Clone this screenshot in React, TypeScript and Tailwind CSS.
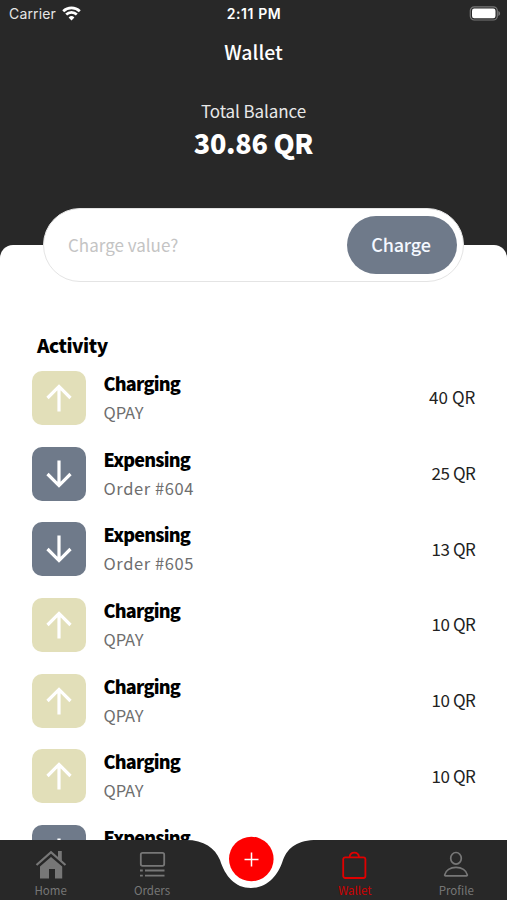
import React from "react";

type Entry = { kind: "Charging" | "Expensing"; detail: string; amount: string };

const entries: Entry[] = [
  { kind: "Charging", detail: "QPAY", amount: "40 QR" },
  { kind: "Expensing", detail: "Order #604", amount: "25 QR" },
  { kind: "Expensing", detail: "Order #605", amount: "13 QR" },
  { kind: "Charging", detail: "QPAY", amount: "10 QR" },
  { kind: "Charging", detail: "QPAY", amount: "10 QR" },
  { kind: "Charging", detail: "QPAY", amount: "10 QR" },
  { kind: "Expensing", detail: "Order #606", amount: "10 QR" },
];

function StatusBar() {
  return (
    <div className="grid h-7 grid-cols-3 items-center pl-[9px] pr-[6px] font-['Inter','Liberation_Sans',sans-serif] text-[14px] leading-7 text-[#e6e6e6]">
      <div className="flex items-center gap-[6px]">
        <span className="tracking-[0.15px]">Carrier</span>
        <svg width="19" height="15" viewBox="0 0 19 15" fill="none" stroke="#fff" strokeWidth="2.7" className="-mt-[2px]">
          <path d="M1.2 5.2a12 12 0 0 1 16.6 0" />
          <path d="M4.2 8.5a7.6 7.6 0 0 1 10.6 0" />
          <path d="M9.5 14.4 6.6 11.4a4.2 4.2 0 0 1 5.8 0z" fill="#fff" stroke="none" />
        </svg>
      </div>
      <span className="pr-[2px] text-center text-[14px] font-semibold tracking-[0.6px] text-white">2:11 PM</span>
      <svg className="-mt-[2px] justify-self-end" width="32" height="15" viewBox="0 0 32 15">
        <rect x="1.3" y=".8" width="27" height="13.2" rx="4" fill="none" stroke="#777" strokeWidth="1.2" />
        <rect x="3" y="2.5" width="23.5" height="9.8" rx="2.2" fill="#fff" />
        <path d="M29.3 5v5c1.2-.4 1.8-1.4 1.8-2.5s-.6-2.1-1.8-2.5z" fill="#777" />
      </svg>
    </div>
  );
}

function ActivityRow({ kind, detail, amount }: Entry) {
  const up = kind === "Charging";
  return (
    <li className="flex h-[54px] shrink-0 items-center">
      <div className={`flex size-[54px] items-center justify-center rounded-[10px] ${up ? "bg-[#e2dfb9]" : "bg-[#6f7a8a]"}`}>
        <svg width="28" height="28" viewBox="0 0 28 28" fill="none" stroke="#fff" strokeWidth="3.2" className={up ? "" : "rotate-180"}>
          <path d="M14 27.5V2M2.5 14 14 2.4 25.5 14" />
        </svg>
      </div>
      <div className="ml-[18px] flex-1">
        <div className="h-[29px] text-[18px] font-black leading-[26px] tracking-[-0.75px] text-black">{kind}</div>
        <div className={`h-[27px] text-[16.5px] font-normal leading-[27px] text-[#6e6e6e] ${up ? "tracking-[-0.1px]" : "tracking-[0.6px]"}`}>{detail}</div>
      </div>
      <div className={`-mt-[2px] text-[17px] text-[#222] ${amount === "40 QR" ? "tracking-[0.1px]" : "tracking-[-0.4px]"}`}>{amount}</div>
    </li>
  );
}

function HomeIcon() {
  return (
    <svg width="32" height="30" viewBox="0 0 32 30" fill="#777">
      <path d="M5 16.5 16 7 27.2 16.5V28.5H20V19h-6v9.5H5z" />
      <path d="M1.2 15.5 16 2.5 30.8 15.5" fill="none" stroke="#282828" strokeWidth="4.6" />
      <path d="M1.5 15 16 2.2 30.5 15" fill="none" stroke="#777" strokeWidth="2.2" />
      <path d="M23 1h3.8v10.5l-3.8-3.4z" />
    </svg>
  );
}

function OrdersIcon() {
  return (
    <svg width="28" height="28" viewBox="0 0 28 28" fill="none" stroke="#777" strokeWidth="1.8">
      <rect x="2.8" y="1.8" width="23.4" height="13" rx="1.8" />
      <path d="M7 19.5H26.5M7 24.7H26.5M2 19.5h2.8M2 24.7h2.8" />
    </svg>
  );
}

function WalletIcon() {
  return (
    <svg width="28" height="30" viewBox="0 0 28 30" fill="none" stroke="#e00000" strokeWidth="1.8">
      <rect x="2.2" y="7.3" width="22.2" height="20.7" rx="2" />
      <path d="M8.6 7.3c.2-3 2.3-4.7 4.7-4.7s4.5 1.7 4.7 4.7" />
    </svg>
  );
}

function ProfileIcon() {
  return (
    <svg width="26" height="28" viewBox="0 0 26 28" fill="none" stroke="#777" strokeWidth="1.7">
      <ellipse cx="13" cy="7.3" rx="5.3" ry="5.8" />
      <path d="M2.5 24.8h21c.6 0 .9-.5.8-1-.9-4.5-5.6-7.5-11.3-7.5S2.6 19.3 1.7 23.8c-.1.5.2 1 .8 1z" />
    </svg>
  );
}

function Tab({ label, active, children }: { label: string; active?: boolean; children: React.ReactNode }) {
  return (
    <div className="flex w-[101.4px] flex-col items-center">
      <div className="flex h-[30px] items-center justify-center">{children}</div>
      <span className={`mt-[2px] text-[11.5px] leading-4 ${active ? "text-[#d00000]" : "text-[#777]"}`}>{label}</span>
    </div>
  );
}

export default function App() {
  return (
    <div className="relative flex h-[900px] w-[507px] flex-col overflow-hidden bg-[#282828] font-['Noto_Sans_CJK_SC','Noto_Sans',sans-serif]">
      <StatusBar />
      <header className="flex h-[217px] shrink-0 flex-col items-center text-white">
        <h1 className="mt-[9px] text-[19.5px] font-medium leading-[30px]">Wallet</h1>
        <p className="mt-[31px] text-[17px] leading-[26px] tracking-[-0.1px] text-[#e8e8e8]">Total Balance</p>
        <p className="text-[27px] font-black leading-[37px] tracking-[-0.3px]">30.86 QR</p>
      </header>

      <main className="flex flex-1 flex-col rounded-t-[13px] bg-white">
        <div className="mx-[43px] -mt-[37px] flex h-[74px] items-center justify-between rounded-full border border-[#e4e4e4] bg-white pl-[24px] pr-[6px]">
          <span className="text-[17px] text-[#c4c4c4]">Charge value?</span>
          <button className="h-[58px] w-[110px] rounded-full bg-[#6f7a8a] pb-[2px] pr-[2px] text-[18px] font-medium tracking-[-0.2px] text-[#f4f8ff]">Charge</button>
        </div>
        <h2 className="ml-[37px] mt-[49px] text-[19px] font-black leading-[28px] tracking-[-0.5px] text-black">Activity</h2>
        <ul className="mt-[12px] flex flex-col gap-[21.7px] pl-[31.5px] pr-[31.5px]">
          {entries.map((e, i) => (
            <ActivityRow key={i} {...e} />
          ))}
        </ul>
      </main>

      <nav className="absolute inset-x-0 bottom-0 h-[64px]">
        <svg className="absolute inset-0" width="507" height="64" viewBox="0 0 507 64">
          <path d="M0 4H186C204 4 215 12 220 24C225 40 235 52 251 52C267 52 278 40 283 24C288 11 298 4 317 4H507V64H0Z" fill="#282828" />
          <circle cx="251.3" cy="23" r="22.3" fill="#fe0000" />
          <path d="M244.5 23.5h14M251.5 16.5v14" stroke="#fff" strokeWidth="1.5" />
        </svg>
        <div className="relative flex pt-[14px]">
          <Tab label="Home"><HomeIcon /></Tab>
          <Tab label="Orders"><OrdersIcon /></Tab>
          <div className="w-[101.4px]" />
          <Tab label="Wallet" active><WalletIcon /></Tab>
          <Tab label="Profile"><ProfileIcon /></Tab>
        </div>
      </nav>
    </div>
  );
}
